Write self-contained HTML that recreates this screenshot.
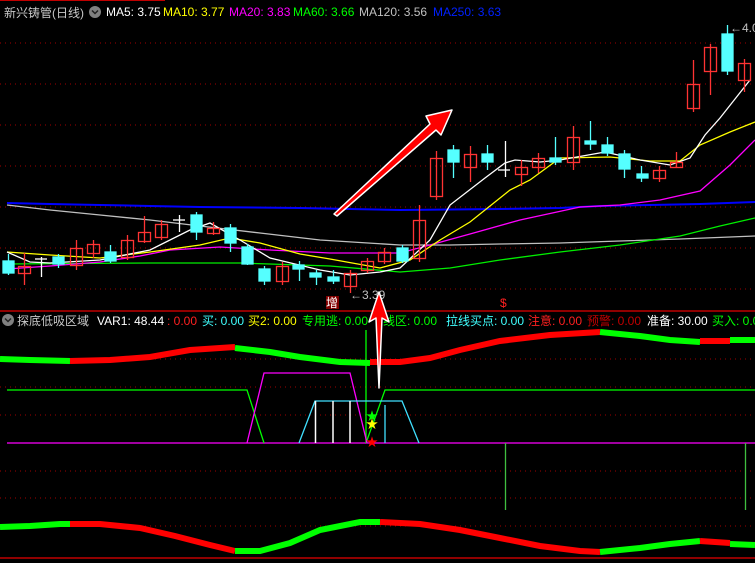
<!DOCTYPE html>
<html><head><meta charset="utf-8"><style>
html,body{margin:0;padding:0;background:#000;width:755px;height:563px;overflow:hidden}
svg{display:block}
text{font-family:"Liberation Sans","Noto Sans CJK SC",sans-serif;font-size:12px}
</style></head><body>
<svg width="755" height="563" viewBox="0 0 755 563" xmlns="http://www.w3.org/2000/svg">
<rect width="755" height="563" fill="#000"/>
<line x1="0" y1="0.5" x2="165" y2="0.5" stroke="#c00000"/>
<!-- dotted grid main -->
<g stroke="#a00000" stroke-dasharray="1,4">
<line x1="0" y1="43" x2="755" y2="43"/><line x1="0" y1="84" x2="755" y2="84"/><line x1="0" y1="125" x2="755" y2="125"/><line x1="0" y1="166" x2="755" y2="166"/><line x1="0" y1="207" x2="755" y2="207"/><line x1="0" y1="248" x2="755" y2="248"/><line x1="0" y1="289" x2="755" y2="289"/>
<line x1="0" y1="359" x2="755" y2="359"/><line x1="0" y1="387" x2="755" y2="387"/><line x1="0" y1="415" x2="755" y2="415"/><line x1="0" y1="471" x2="755" y2="471"/><line x1="0" y1="498" x2="755" y2="498"/>
<line x1="0" y1="526" x2="755" y2="526"/>
</g>
<!-- MA lines -->
<g fill="none" stroke-width="1.3">
<polyline stroke="#0000ff" stroke-width="2" points="7,203 50,204 100,205 150,206 200,207 300,208 400,210 500,209 560,208 600,206 650,205 700,204 755,202"/>
<polyline stroke="#c0c0c0" points="7,205 50,210 100,215 150,220 200,226 260,233 320,240 400,245 450,245 500,244 560,243 620,241 680,239 755,236"/>
<polyline stroke="#00ee00" points="7,264 150,263 240,263 330,266 400,272 450,268 500,260 560,252 620,245 680,236 720,226 755,218"/>
<polyline stroke="#ff00ff" points="7,269 50,266 100,262 140,256 170,250 220,247 270,250 330,253 400,253 430,245 470,234 520,220 580,207 620,205 660,200 700,191 730,165 755,140"/>
<polyline stroke="#ffff00" points="7,252 50,255 100,258 150,252 200,245 230,238 260,243 300,254 330,259 380,268 410,260 440,240 470,222 510,190 530,180 560,158 610,157 650,161 680,161 700,145 730,132 755,122"/>
<polyline stroke="#ffffff" points="7,252 30,262 50,263 100,260 150,250 190,230 210,223 240,240 270,258 320,270 350,275 380,272 400,268 430,240 450,205 485,178 505,163 515,160 540,162 560,160 605,152 640,160 670,165 690,158 705,135 720,118 750,80"/>
</g>
<!-- candles -->
<g stroke-width="1.3">
<!-- red hollow -->
<g fill="none" stroke="#ff3333">
<line x1="24.5" y1="253" x2="24.5" y2="285"/><rect x="18.5" y="266.5" width="12" height="7"/>
<line x1="76.5" y1="240" x2="76.5" y2="270"/><rect x="70.5" y="248.5" width="12" height="17"/>
<line x1="93.5" y1="240" x2="93.5" y2="258"/><rect x="87.5" y="244.5" width="12" height="9"/>
<line x1="127.5" y1="235" x2="127.5" y2="260"/><rect x="121.5" y="240.5" width="12" height="17"/>
<line x1="144.5" y1="216" x2="144.5" y2="243"/><rect x="138.5" y="232.5" width="12" height="9"/>
<line x1="161.5" y1="220" x2="161.5" y2="240"/><rect x="155.5" y="224.5" width="12" height="13"/>
<line x1="213.5" y1="222" x2="213.5" y2="235"/><rect x="207.5" y="228.5" width="12" height="5"/>
<line x1="282.5" y1="262" x2="282.5" y2="285"/><rect x="276.5" y="266.5" width="12" height="15"/>
<line x1="350.5" y1="270" x2="350.5" y2="293"/><rect x="344.5" y="273.5" width="12" height="13"/>
<line x1="367.5" y1="258" x2="367.5" y2="273"/><rect x="361.5" y="261.5" width="12" height="9"/>
<line x1="384.5" y1="248" x2="384.5" y2="264"/><rect x="378.5" y="252.5" width="12" height="9"/>
<line x1="419.5" y1="205" x2="419.5" y2="262"/><rect x="413.5" y="220.5" width="12" height="38"/>
<line x1="436.5" y1="151" x2="436.5" y2="200"/><rect x="430.5" y="158.5" width="12" height="38"/>
<line x1="470.5" y1="146" x2="470.5" y2="182"/><rect x="464.5" y="154.5" width="12" height="13"/>
<line x1="521.5" y1="160" x2="521.5" y2="186"/><rect x="515.5" y="167.5" width="12" height="7"/>
<line x1="538.5" y1="153" x2="538.5" y2="173"/><rect x="532.5" y="158.5" width="12" height="9"/>
<line x1="573.5" y1="126" x2="573.5" y2="170"/><rect x="567.5" y="137.5" width="12" height="25"/>
<line x1="659.5" y1="166" x2="659.5" y2="182"/><rect x="653.5" y="170.5" width="12" height="8"/>
<line x1="676.5" y1="152" x2="676.5" y2="167"/><rect x="670.5" y="162.5" width="12" height="5"/>
<line x1="693.5" y1="60" x2="693.5" y2="112"/><rect x="687.5" y="84.5" width="12" height="24"/>
<line x1="710.5" y1="44" x2="710.5" y2="95"/><rect x="704.5" y="47.5" width="12" height="24"/>
<line x1="744.5" y1="59" x2="744.5" y2="92"/><rect x="738.5" y="63.5" width="12" height="17"/>
</g>
<!-- cyan filled -->
<g fill="#55ffff" stroke="#55ffff">
<line x1="8.5" y1="254" x2="8.5" y2="275"/><rect x="3" y="261" width="11" height="12"/>
<line x1="58.5" y1="254" x2="58.5" y2="268"/><rect x="53" y="257" width="11" height="7"/>
<line x1="110.5" y1="245" x2="110.5" y2="263"/><rect x="105" y="252" width="11" height="9"/>
<line x1="196.5" y1="212" x2="196.5" y2="240"/><rect x="191" y="215" width="11" height="17"/>
<line x1="230.5" y1="224" x2="230.5" y2="252"/><rect x="225" y="228" width="11" height="15"/>
<line x1="247.5" y1="244" x2="247.5" y2="265"/><rect x="242" y="247" width="11" height="17"/>
<line x1="264.5" y1="266" x2="264.5" y2="285"/><rect x="259" y="269" width="11" height="12"/>
<line x1="299.5" y1="261" x2="299.5" y2="281"/><rect x="293" y="265" width="11" height="4"/>
<line x1="316.5" y1="270" x2="316.5" y2="285"/><rect x="310" y="273" width="11" height="4"/>
<line x1="333.5" y1="270" x2="333.5" y2="284"/><rect x="328" y="277" width="11" height="4"/>
<line x1="402.5" y1="245" x2="402.5" y2="263"/><rect x="397" y="248" width="11" height="13"/>
<line x1="453.5" y1="145" x2="453.5" y2="178"/><rect x="448" y="150" width="11" height="12"/>
<line x1="487.5" y1="145" x2="487.5" y2="170"/><rect x="482" y="154" width="11" height="8"/>
<line x1="555.5" y1="137" x2="555.5" y2="165"/><rect x="550" y="158" width="11" height="4"/>
<line x1="590.5" y1="121" x2="590.5" y2="150"/><rect x="585" y="141" width="11" height="3"/>
<line x1="607.5" y1="137" x2="607.5" y2="156"/><rect x="602" y="145" width="11" height="8"/>
<line x1="624.5" y1="150" x2="624.5" y2="178"/><rect x="619" y="154" width="11" height="15"/>
<line x1="641.5" y1="166" x2="641.5" y2="182"/><rect x="637" y="174" width="11" height="4"/>
<line x1="727.5" y1="25" x2="727.5" y2="75"/><rect x="722" y="34" width="11" height="37"/>
</g>
<g stroke="#ffffff">
<line x1="35" y1="259" x2="47" y2="259"/><line x1="41.5" y1="257" x2="41.5" y2="277"/>
<line x1="173" y1="220" x2="185" y2="220"/><line x1="179.5" y1="215" x2="179.5" y2="232"/>
<line x1="498" y1="170" x2="510" y2="170"/><line x1="505.5" y1="141" x2="505.5" y2="177"/>
</g>
</g>
<text x="730" y="32" fill="#c0c0c0" font-size="11">←4.0</text>
<text x="350" y="299" fill="#c0c0c0" font-size="11">←3.39</text>
<rect x="326" y="296" width="13" height="13" fill="#800000"/>
<text x="326" y="307" fill="#fff" font-size="11">增</text>
<text x="500" y="307" fill="#ff2020" font-size="11">$</text>
<!-- arrow 1 -->
<polygon points="334,214 430,124 426,116 452,110 441,135 436,130 337,216" fill="#ff0000" stroke="#ffffff" stroke-width="1.5" stroke-linejoin="round"/>
<!-- header -->
<text x="4" y="17" fill="#c8c8c8" font-size="13">新兴铸管(日线)</text>
<circle cx="95" cy="12" r="6" fill="#808080"/><path d="M92,10.5 L95,13.5 L98,10.5" stroke="#222" stroke-width="1.5" fill="none"/>
<text x="106" y="16" fill="#ffffff">MA5: 3.75</text>
<text x="163" y="16" fill="#ffff00">MA10: 3.77</text>
<text x="229" y="16" fill="#ff00ff">MA20: 3.83</text>
<text x="293" y="16" fill="#00ff00">MA60: 3.66</text>
<text x="359" y="16" fill="#c0c0c0">MA120: 3.56</text>
<text x="433" y="16" fill="#0020ff">MA250: 3.63</text>
<!-- indicator separator -->
<line x1="0" y1="311" x2="755" y2="311" stroke="#c00000" stroke-width="1.5"/>
<circle cx="8" cy="320" r="6" fill="#808080"/><path d="M5,318.5 L8,321.5 L11,318.5" stroke="#222" stroke-width="1.5" fill="none"/>
<text x="17" y="325" fill="#c8c8c8" font-size="13">探底低吸区域</text>
<text x="97" y="325" fill="#ffffff">VAR1: 48.44</text>
<text x="167" y="325" fill="#ff2020">: 0.00</text>
<text x="202" y="325" fill="#40ffff">买: 0.00</text>
<text x="248" y="325" fill="#ffff00">买2: 0.00</text>
<text x="302" y="325" fill="#00ff00">专用逃: 0.00</text>
<text x="383" y="325" fill="#00ff00">线区: 0.00</text>
<text x="446" y="325" fill="#40ffff">拉线买点: 0.00</text>
<text x="528" y="325" fill="#ff2020">注意: 0.00</text>
<text x="587" y="325" fill="#c00000">预警: 0.00</text>
<text x="647" y="325" fill="#ffffff">准备: 30.00</text>
<text x="712" y="325" fill="#00ff00">买入: 0.0</text>
<!-- top band -->
<g fill="none" stroke-width="6">
<polyline stroke="#00ff00" points="0,359 30,360 70,361"/>
<polyline stroke="#ff0000" points="70,361 110,360 150,357 190,350 235,347"/>
<polyline stroke="#00ff00" points="235,348 270,352 300,357 340,362 370,363"/>
<polyline stroke="#ff0000" points="370,362 400,362 430,358 460,350 500,341 550,335 600,332"/>
<polyline stroke="#00ff00" points="600,332 640,336 670,340 700,342"/>
<polyline stroke="#ff0000" points="700,341 730,341"/>
<polyline stroke="#00ff00" points="730,340 755,340"/>
</g>
<!-- indicator lines -->
<g fill="none" stroke-width="1.3">
<line x1="7" y1="443" x2="755" y2="443" stroke="#ff00ff"/>
<polyline stroke="#00ff00" points="7,390 247,390 264,443"/>
<polyline stroke="#00ff00" points="366,443 385,390 755,390"/>
<line x1="366" y1="330" x2="366" y2="443" stroke="#00ff00"/>
<polyline stroke="#ff00ff" points="247,443 264,373 350,373 367,443"/>
<polyline stroke="#40e0ff" points="299,443 315,401 402,401 419,443"/>
<line x1="385" y1="405" x2="385" y2="443" stroke="#40e0ff"/>
<g stroke="#ffffff" stroke-width="1.5"><line x1="315.5" y1="401" x2="315.5" y2="443"/><line x1="333" y1="401" x2="333" y2="443"/><line x1="350" y1="401" x2="350" y2="443"/></g>
<line x1="505.5" y1="443" x2="505.5" y2="510" stroke="#40c040"/>
<line x1="745.5" y1="443" x2="745.5" y2="510" stroke="#40c040"/>
</g>
<text x="366" y="420" fill="#00ff00" font-size="11">★</text>
<text x="366" y="428" fill="#ffff00" font-size="11">★</text>
<text x="366" y="446" fill="#ff0000" font-size="11">★</text>
<!-- arrow 2 -->
<polygon points="379,292 389,322 382,318 379,388 376,318 369,322" fill="#ff0000" stroke="#ffffff" stroke-width="1.5" stroke-linejoin="round"/>
<!-- bottom band -->
<g fill="none" stroke-width="6">
<polyline stroke="#00ff00" points="0,527 30,526 60,524 70,524"/>
<polyline stroke="#ff0000" points="70,524 100,524 140,528 175,536 210,545 235,551"/>
<polyline stroke="#00ff00" points="235,551 260,551 290,543 320,530 360,522 380,522"/>
<polyline stroke="#ff0000" points="380,522 420,524 460,530 500,538 540,546 580,551 600,552"/>
<polyline stroke="#00ff00" points="600,552 640,548 670,544 700,541"/>
<polyline stroke="#ff0000" points="700,541 730,543"/>
<polyline stroke="#00ff00" points="730,544 755,545"/>
</g>
<line x1="0" y1="558" x2="755" y2="558" stroke="#c00000" stroke-width="1.5"/>
</svg>
</body></html>
